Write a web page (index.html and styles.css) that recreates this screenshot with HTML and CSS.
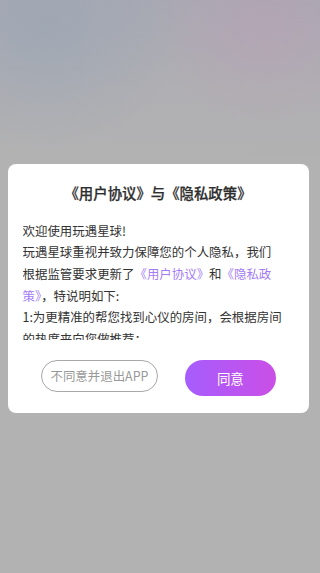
FILE: index.html
```html
<!DOCTYPE html>
<html lang="zh-CN">
<head>
<meta charset="utf-8">
<meta name="viewport" content="width=device-width, initial-scale=1">
<title>用户协议与隐私政策</title>
<link rel="stylesheet" href="styles.css">
</head>
<body>
<div class="screen">
  <div class="dialog">
    <h1 class="title">《用户协议》与《隐私政策》</h1>
    <div class="content">
      <p>欢迎使用玩遇星球!</p>
      <p>玩遇星球重视并致力保障您的个人隐私，我们根据监管要求更新了<span class="link">《用户协议》</span>和<span class="link">《隐私政策》</span>，特说明如下:</p>
      <p>1:为更精准的帮您找到心仪的房间，会根据房间的热度来向您做推荐；</p>
      <p>2:为保障您的账号安全，我们会收集您的设备信息；</p>
    </div>
    <div class="actions">
      <button class="btn btn-decline">不同意并退出APP</button>
      <button class="btn btn-agree">同意</button>
    </div>
  </div>
</div>
</body>
</html>
```
FILE: styles.css
```css
html, body {
  margin: 0;
  padding: 0;
}
body {
  width: 320px;
  height: 573px;
  overflow: hidden;
  font-family: "Noto Sans CJK SC", "Noto Sans", sans-serif;
  background-color: #b2b2b2;
  background-image:
    radial-gradient(ellipse 140px 120px at 45px 30px, rgba(150, 165, 180, 0.55), rgba(150, 165, 180, 0) 100%),
    radial-gradient(ellipse 110px 100px at 265px 25px, rgba(185, 160, 180, 0.55), rgba(185, 160, 180, 0) 100%),
    linear-gradient(to bottom, #a9a9b3 0px, #b0afb3 90px, #b2b2b2 170px);
}
.screen {
  padding-top: 164px;
  padding-left: 7.5px;
}
.dialog {
  width: 301px;
  background: #ffffff;
  border-radius: 8px;
  display: flex;
  flex-direction: column;
  padding-bottom: 17px;
}
.title {
  margin: 0;
  padding-top: 19.3px;
  font-size: 14.4px;
  line-height: 20px;
  font-weight: 500;
  color: #2e2e2e;
  text-align: center;
  -webkit-text-stroke: 0.25px #2e2e2e;
}
.content {
  margin-top: 17.5px;
  margin-left: 15px;
  width: 261px;
  height: 119px;
  overflow: hidden;
  font-size: 12.44px;
  line-height: 21.6px;
  color: #333333;
}
.content p {
  margin: 0;
}
.link {
  color: #a47cf8;
}
.actions {
  margin-top: 20px;
  display: flex;
  align-items: flex-start;
  padding-left: 33.2px;
  gap: 26.7px;
}
.btn {
  font-family: "Noto Sans CJK SC", "Noto Sans", sans-serif;
  border-radius: 999px;
  padding: 0;
  cursor: pointer;
}
.btn-decline {
  width: 117.5px;
  height: 32px;
  background: #ffffff;
  border: 1px solid #a8a8a8;
  color: #999999;
  font-size: 12.44px;
}
.btn-agree {
  width: 91px;
  height: 36px;
  border: none;
  background: linear-gradient(to right, #a65dfd, #ca4fe6);
  color: #ffffff;
  font-size: 13.5px;
}
```
